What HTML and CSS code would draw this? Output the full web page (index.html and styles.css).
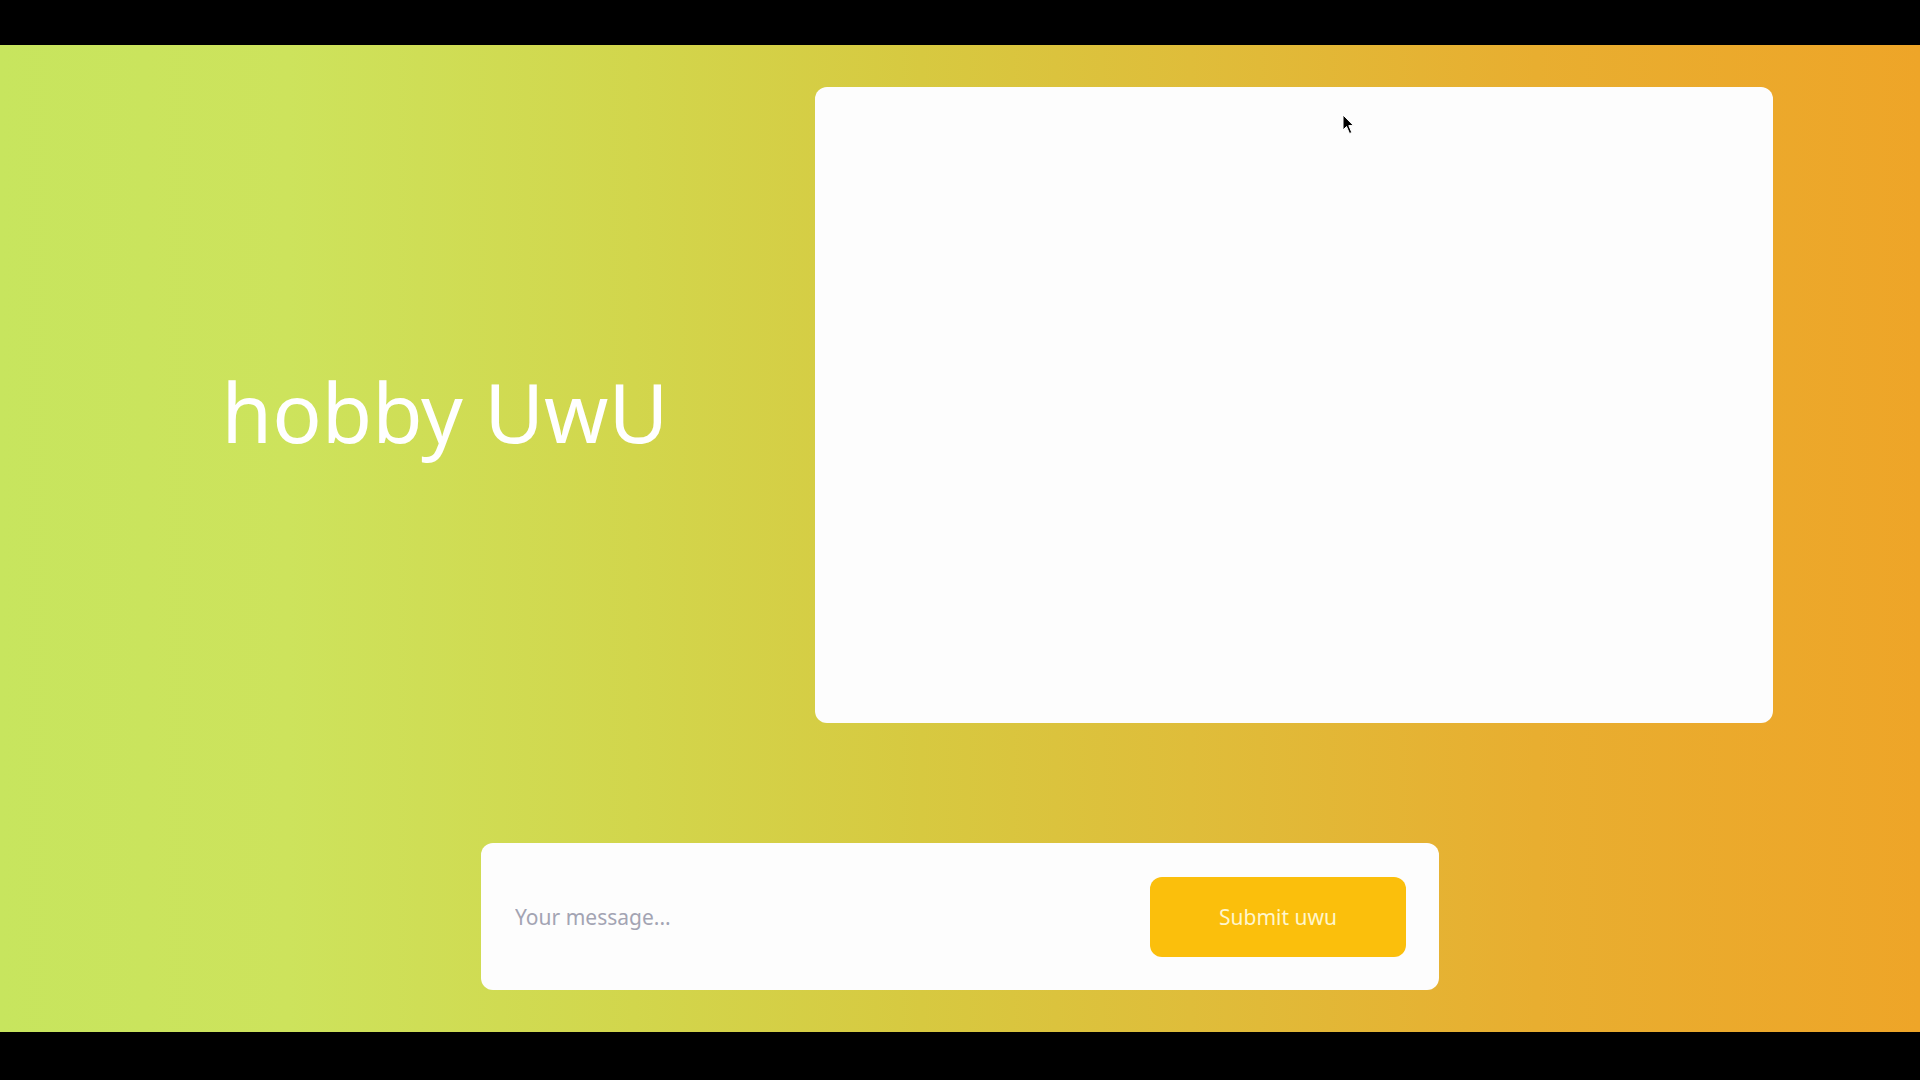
FILE: index.html
```html
<!DOCTYPE html>
<html lang="en">
<head>
<meta charset="utf-8">
<title>hobby UwU</title>
<link rel="stylesheet" href="styles.css">
</head>
<body>
<div class="bar"></div>
<main class="page">
  <section class="top">
    <div class="title-col">
      <h1 class="title">hobby UwU</h1>
    </div>
    <div class="card"></div>
  </section>
  <form class="composer">
    <input class="message" type="text" placeholder="Your message...">
    <button class="submit" type="button">Submit uwu</button>
  </form>
  <svg class="cursor" width="14" height="22" viewBox="0 0 14 22"><path d="M1 1 L1 16 L4.5 12.5 L7.5 19.5 L9.8 18.5 L6.8 11.6 L11.5 11.6 Z" fill="#000" stroke="#fff" stroke-width="1"/></svg>
</main>
<div class="bar"></div>
</body>
</html>
```
FILE: styles.css
```css
* { box-sizing: border-box; }
html, body { margin: 0; padding: 0; }
body {
  background: #000;
  width: 1920px;
  height: 1080px;
  overflow: hidden;
  font-family: "Noto Sans", "Open Sans", sans-serif;
}
.bar { height: 45px; background: #000; }
.page {
  position: relative;
  height: 987px;
  background: linear-gradient(to right, #c7e55e 0%, #cde35c 15%, #d2d64c 33%, #d7c940 48%, #dfbd3a 62%, #e8ae30 80%, #eea528 100%);
  display: flex;
  flex-direction: column;
  align-items: center;
  padding: 42px 0 42px 0;
}
.top {
  width: 100%;
  display: flex;
  align-items: center;
  height: 636px;
}
.title-col {
  width: 815px;
  display: flex;
  justify-content: center;
  padding-left: 75px;
}
.title {
  margin: 12px 0 0 0;
  font-weight: 400;
  font-size: 82px;
  color: #ffffff;
}
.card {
  width: 958px;
  height: 636px;
  background: #fdfdfd;
  border-radius: 12px;
}
.composer {
  margin-top: 120px;
  width: 958px;
  height: 147px;
  background: #fdfdfd;
  border-radius: 12px;
  display: flex;
  align-items: center;
  padding: 0 33px 0 34px;
  gap: 24px;
}
.message {
  flex: 1;
  border: none;
  background: transparent;
  font-family: "Noto Sans", "Open Sans", sans-serif;
  font-size: 21px;
  color: #333;
  outline: none;
  padding: 0;
}
.message::placeholder { color: #a3a4b3; }
.submit {
  width: 256px;
  height: 80px;
  border: none;
  border-radius: 12px;
  background: #fbbf0c;
  color: #fff6cc;
  font-family: "Noto Sans", "Open Sans", sans-serif;
  font-size: 21px;
}
.cursor {
  position: absolute;
  left: 1342px;
  top: 69px;
}
```
